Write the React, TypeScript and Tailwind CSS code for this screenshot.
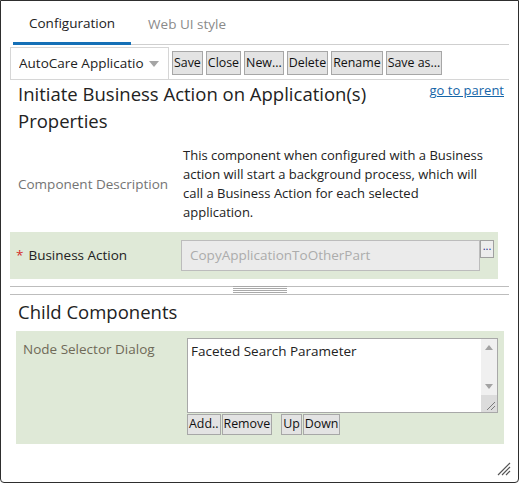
import * as React from "react"

const TOOLBAR = ["Save", "Close", "New...", "Delete", "Rename", "Save as..."]

export default function App() {
  return (
    <div className="relative h-[483px] w-[519px] overflow-hidden rounded-b-[4px] border border-[#2e2e2e] bg-white font-['Open_Sans',sans-serif] text-[#222]">
      {/* tabs */}
      <div className="ml-[12px] mr-[9px] flex h-[44px] items-stretch">
        <div className="flex items-center border-b-[3px] border-[#1570b7] px-[16px] pt-[3px] text-[13.5px] text-[#222]">
          Configuration
        </div>
        <div className="flex flex-1 items-center border-b border-[#cfcfcf] px-[17px] pt-[4px] text-[13.5px] text-[#8a8a8a]">
          Web UI style
        </div>
      </div>

      {/* toolbar */}
      <div className="mx-[9px] mt-[2px] flex h-[33px] items-center border-b border-[#d6d6d6]">
        <div className="flex h-full w-[159px] items-center border-x border-t border-[#d6d6d6] pl-[8px] pr-[8px] text-[13.5px]">
          <span className="flex-1 overflow-hidden whitespace-nowrap">AutoCare Applicatio</span>
          <svg width="12" height="8" viewBox="0 0 12 8" className="ml-[2px]">
            <path d="M1 1h10L6 7z" fill="#a5a5a5" />
          </svg>
        </div>
        <div className="ml-[3px] flex gap-[3px]">
          {TOOLBAR.map((b) => (
            <Btn key={b} label={b} className="h-[24px] text-[12.4px]" />
          ))}
        </div>
      </div>

      {/* header */}
      <div className="flex items-start justify-between pl-[17px] pr-[14px]">
        <h1 className="text-[18.5px] leading-[27px] text-[#222]">
          Initiate Business Action on Application(s)
          <br />
          Properties
        </h1>
        <a className="mt-[2px] text-[13px] leading-[17px] text-[#1565a8] underline">go to parent</a>
      </div>

      {/* description */}
      <div className="mt-[12px] flex items-center">
        <div className="w-[182px] pl-[17px] text-[13.5px] text-[#747474]">Component Description</div>
        <div className="text-[13px] leading-[19px] text-[#222]">
          This component when configured with a Business
          <br />
          action will start a background process, which will
          <br />
          call a Business Action for each selected
          <br />
          application.
        </div>
      </div>

      {/* business action */}
      <div className="ml-[9px] mr-[20px] mt-[10px] flex h-[47px] items-center bg-[#dfe9d7]">
        <div className="flex w-[171px] items-center pl-[6px] text-[13.5px]">
          <span className="mr-[5px] text-[#d42b2b]">*</span>
          Business Action
        </div>
        <div className="flex h-[31px] w-[299px] items-center border border-[#bcbcbc] bg-[#ebebeb] px-[8px] text-[13.5px] text-[#acacac]">
          CopyApplicationToOtherPart
        </div>
        <div className="mb-[13px] flex h-[18px] w-[14px] items-center justify-center border border-[#a0a0a0] bg-[#ededed] pb-[5px] text-[11px] text-[#1b2a8a]">
          ...
        </div>
      </div>

      {/* splitter */}
      <div className="mx-[9px] mt-[7px] flex h-[9px] justify-center border-y border-[#bdbdbd]">
        <div className="-mt-[1px] flex w-[54px] flex-col gap-[1px]">
          <div className="h-px bg-[#a9a9a9]" />
          <div className="h-px bg-[#a9a9a9]" />
          <div className="h-px bg-[#a9a9a9]" />
          <div className="h-px bg-[#a9a9a9]" />
        </div>
      </div>

      {/* child components */}
      <h2 className="mt-[4px] pl-[17px] text-[18.5px] leading-[26px] text-[#222]">Child Components</h2>
      <div className="ml-[15px] mr-[14px] mt-[6px] flex bg-[#dfe9d7] pb-[9px] pt-[7px]">
        <div className="w-[171px] pl-[7px] pt-[1px] text-[13.5px] text-[#6f6a58]">Node Selector Dialog</div>
        <div className="flex flex-col">
          <div className="flex h-[75px] w-[311px] border border-[#a8a8a8] bg-white">
            <div className="flex-1 pl-[3px] pt-[2px] text-[13.5px]">Faceted Search Parameter</div>
            <div className="flex w-[16px] flex-col bg-[#f0f0f0]">
              <div className="flex h-[17px] items-center justify-center">
                <svg width="8" height="5" viewBox="0 0 8 5">
                  <path d="M0 5L4 0l4 5z" fill="#a3a3a3" />
                </svg>
              </div>
              <div className="flex-1" />
              <div className="flex h-[17px] items-center justify-center">
                <svg width="8" height="5" viewBox="0 0 8 5">
                  <path d="M0 0h8L4 5z" fill="#a3a3a3" />
                </svg>
              </div>
              <div className="flex h-[17px] items-end justify-end bg-[#dcdcdc] p-[2px]">
                <svg width="9" height="9" viewBox="0 0 9 9">
                  <path d="M9 1L1 9M9 5L5 9" stroke="#7a7a7a" strokeWidth="1" />
                </svg>
              </div>
            </div>
          </div>
          <div className="mt-px flex">
            <Btn label="Add.." className="h-[21px] text-[12.4px]" />
            <Btn label="Remove" className="ml-[1px] h-[21px] text-[12.4px]" />
            <Btn label="Up" className="ml-[9px] h-[21px] text-[12.4px]" />
            <Btn label="Down" className="ml-[1px] h-[21px] text-[12.4px]" />
          </div>
        </div>
      </div>

      {/* window resize grip */}
      <svg width="14" height="14" viewBox="0 0 14 14" className="absolute bottom-[6px] right-[7px]">
        <path d="M13 1L1 13M13 5L5 13M13 9L9 13" stroke="#555" strokeWidth="1.2" />
      </svg>
    </div>
  )
}

function Btn({ label, className }: { label: string; className?: string }) {
  return (
    <button
      className={`flex items-center border border-[#a7a7a7] bg-[#e3e3e3] px-[1px] leading-none text-[#111] ${className ?? ""}`}
    >
      {label}
    </button>
  )
}
